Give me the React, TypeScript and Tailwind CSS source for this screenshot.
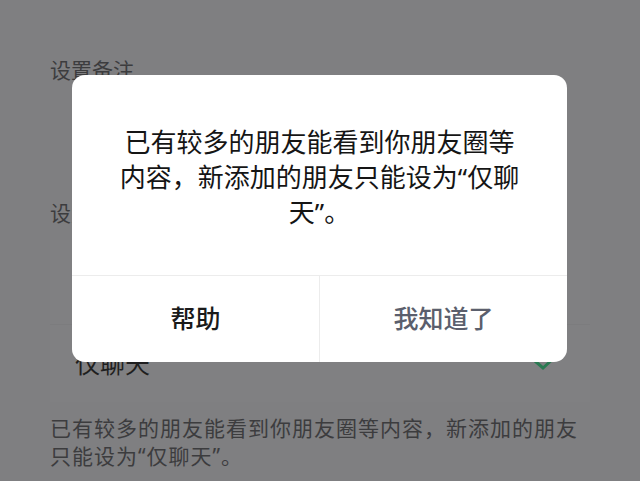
import React from "react";

const font = { fontFamily: '"Noto Sans", "Noto Sans CJK SC", sans-serif' };

export default function App() {
  return (
    <div
      className="relative w-[640px] h-[481px] overflow-hidden bg-[#7f7f81]"
      style={font}
    >
      {/* background page (dimmed) */}
      <div className="flex flex-col pt-[56px]">
        <div className="pl-[50px] text-[21px] leading-[29px] text-[#3c3c3e]">设置备注</div>
        <div className="h-[114px] mx-[50px]" />
        <div className="pl-[50px] text-[21px] leading-[29px] text-[#3c3c3e]">设置朋友权限</div>
        <div className="mt-[12px] mx-[50px] bg-[#808082] flex flex-col">
          <div className="h-[85px] flex items-center pl-[25px] text-[25px] text-[#1f1f20] border-b border-[#7c7c7e]">
            聊天、朋友圈、微信运动等
          </div>
          <div className="h-[77px] flex items-center justify-between pl-[25px] pr-[33px]">
            <span className="text-[25px] leading-[30px] text-[#1f1f20] -mt-[2px]">仅聊天</span>
            <svg width="24" height="16" viewBox="0 0 24 16" className="-mt-[2px]">
              <polyline
                points="2,6 10,13 22,2"
                fill="none"
                stroke="#2a7a52"
                strokeWidth="3"
              />
            </svg>
          </div>
        </div>
        <div className="mt-[12px] px-[50px] text-[21px] leading-[28px] tracking-[1px] text-[#3c3c3e]">
          已有较多的朋友能看到你朋友圈等内容，新添加的朋友
          <br />
          只能设为“仅聊天”。
        </div>
      </div>

      {/* dialog */}
      <div className="absolute left-[72px] top-[75px] w-[495px] h-[287px] bg-white rounded-[13px] flex flex-col overflow-hidden">
        <div className="h-[200px] pt-[50px] flex flex-col items-center text-[26px] leading-[35px] text-[#151515]">
          <div>已有较多的朋友能看到你朋友圈等</div>
          <div>内容，新添加的朋友只能设为“仅聊</div>
          <div>天”。</div>
        </div>
        <div className="flex-1 flex border-t border-[#ececec]">
          <div className="flex-1 flex items-center justify-center text-[25px] font-medium text-[#1a1a1a] border-r border-[#ececec] pb-[1px]">
            帮助
          </div>
          <div className="flex-1 flex items-center justify-center text-[25px] font-medium text-[#5b5f6d] pb-[1px]">
            我知道了
          </div>
        </div>
      </div>
    </div>
  );
}
